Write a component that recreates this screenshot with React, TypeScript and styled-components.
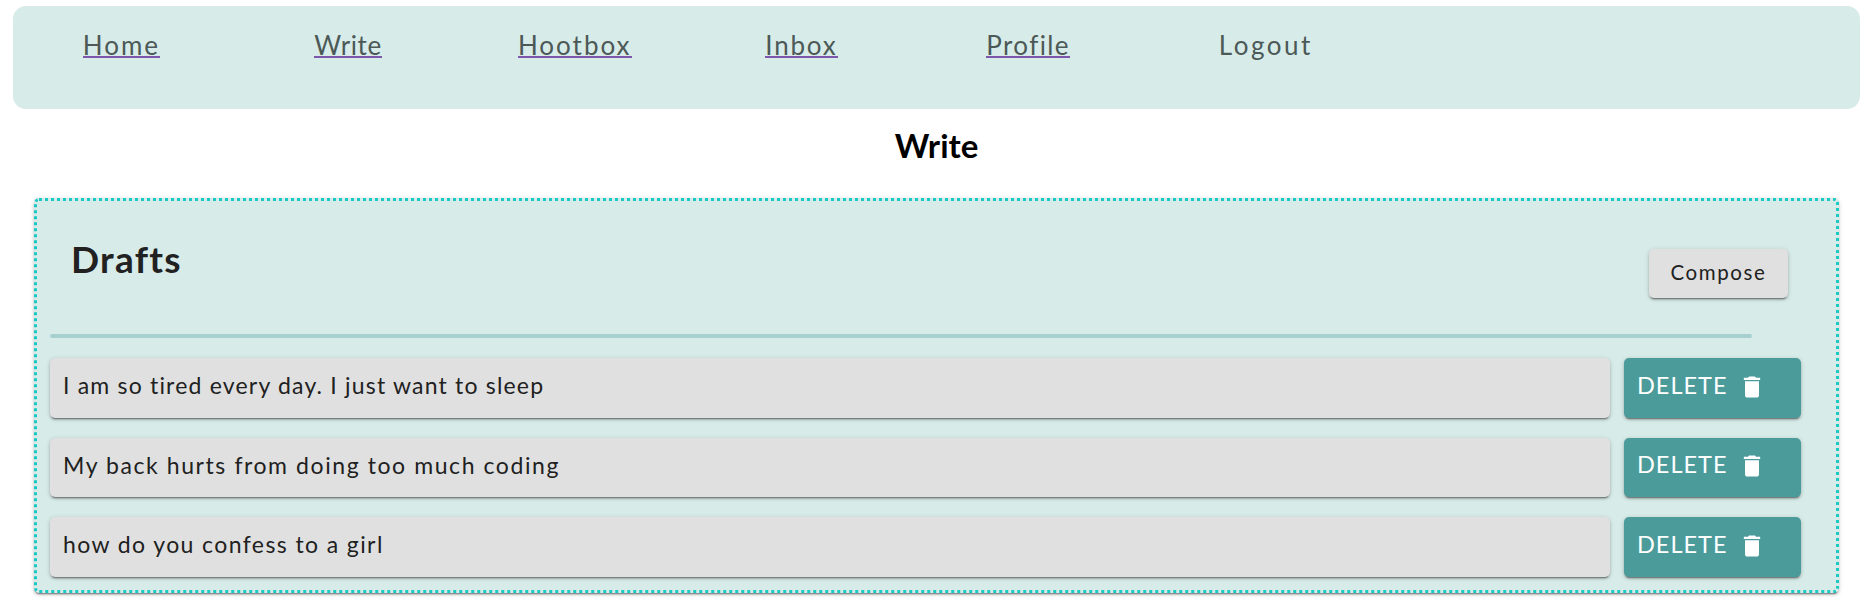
import React from "react";
import styled, { createGlobalStyle } from "styled-components";
import { MdDelete } from "react-icons/md";

const GlobalStyle = createGlobalStyle`
  * { box-sizing: border-box; }
  body {
    margin: 0;
    background: #fff;
    color: #212121;
    font-family: Lato, "Open Sans", sans-serif;
    font-weight: 400;
  }
`;

const elevation = `
  box-shadow: 0 3px 1px -2px rgba(0, 0, 0, 0.3), 0 2px 2px 0 rgba(0, 0, 0, 0.18),
    0 1px 5px 0 rgba(0, 0, 0, 0.16);
`;

const Page = styled.div`
  height: 612px;
  padding: 6px 13px 0;
  overflow: hidden;
`;

const NavBar = styled.nav`
  display: grid;
  grid-template-columns: repeat(6, 226.7px);
  height: 103px;
  padding: 15px 0 0;
  border-radius: 13px;
  background: #d7ebe9;
`;

const NavItem = styled.div<{ $shift?: number }>`
  margin-left: ${(p) => p.$shift ?? -10}px;
  text-align: center;
  font-size: 26px;
  line-height: 49px;
`;

const NavLink = styled.a<{ $track: number; $underline?: boolean }>`
  border-bottom: ${(p) => (p.$underline ? "2px solid #7e57ad" : "none")};
  display: inline-block;
  height: 37px;
  color: #4c5957;
  letter-spacing: ${(p) => p.$track}px;
  white-space: nowrap;
`;

const Title = styled.h1`
  height: 89px;
  margin: 0;
  padding-top: 16px;
  text-align: center;
  color: #000;
  font-size: 33px;
  font-weight: 700;
  line-height: 40px;
`;

const Panel = styled.section`
  height: 395px;
  margin: 0 21px;
  padding: 0 13px;
  border: 3px dotted #1bc9c4;
  border-radius: 5px;
  background: #d7ebe9;
  ${elevation}
`;

const PanelHead = styled.header`
  display: flex;
  justify-content: space-between;
  height: 133px;
  padding: 0 35px 0 21px;
`;

const PanelTitle = styled.h2`
  margin: 35px 0 0;
  font-size: 37px;
  font-weight: 700;
  line-height: 46px;
  letter-spacing: 1.3px;
`;

const ComposeButton = styled.button`
  width: 139px;
  height: 49px;
  margin-top: 48px;
  padding: 0 0 3px;
  border: 0;
  border-radius: 5px;
  background: #e0e0e0;
  color: #212121;
  font: 400 20.5px Lato, sans-serif;
  letter-spacing: 1.6px;
  ${elevation}
`;

const Divider = styled.hr`
  width: 1702px;
  height: 4px;
  margin: 0 0 20px;
  border: 0;
  border-radius: 2px;
  background: #a6d1cf;
`;

const DraftList = styled.div`
  display: grid;
  gap: 20px;
`;

const DraftRow = styled.div`
  display: grid;
  grid-template-columns: 1560px 177px;
  gap: 14px;
  height: 59.5px;
`;

const DraftCard = styled.div<{ $track: number }>`
  padding-left: 13px;
  border-radius: 5px;
  background: #e0e0e0;
  font-size: 23px;
  line-height: 55px;
  letter-spacing: ${(p) => p.$track}px;
  white-space: nowrap;
  ${elevation}
`;

const DeleteButton = styled.button`
  display: flex;
  align-items: center;
  gap: 10px;
  padding: 0 0 2px 13px;
  border: 0;
  border-radius: 5px;
  background: #4b9b9a;
  color: #fff;
  font: 400 23.5px Lato, sans-serif;
  letter-spacing: 1px;
  ${elevation}
`;

const DeleteLabel = styled.span`
  padding-bottom: 4px;
`;

const links = [
  { label: "Home", track: 2 },
  { label: "Write", track: 0.6 },
  { label: "Hootbox", track: 2 },
  { label: "Inbox", track: 1.8 },
  { label: "Profile", track: 1.4 },
];

const drafts = [
  { text: "I am so tired every day. I just want to sleep", track: 1.19 },
  { text: "My back hurts from doing too much coding", track: 1.58 },
  { text: "how do you confess to a girl", track: 1.4 },
];

export default function App() {
  return (
    <>
      <GlobalStyle />
      <Page>
        <NavBar>
          {links.map((l) => (
            <NavItem key={l.label}>
              <NavLink $track={l.track} $underline>
                {l.label}
              </NavLink>
            </NavItem>
          ))}
          <NavItem $shift={12}>
            <NavLink $track={2.5}>Logout</NavLink>
          </NavItem>
        </NavBar>
        <Title>Write</Title>
        <Panel>
          <PanelHead>
            <PanelTitle>Drafts</PanelTitle>
            <ComposeButton>Compose</ComposeButton>
          </PanelHead>
          <Divider />
          <DraftList>
            {drafts.map((d) => (
              <DraftRow key={d.text}>
                <DraftCard $track={d.track}>{d.text}</DraftCard>
                <DeleteButton>
                  <DeleteLabel>DELETE</DeleteLabel>
                  <MdDelete size={28} />
                </DeleteButton>
              </DraftRow>
            ))}
          </DraftList>
        </Panel>
      </Page>
    </>
  );
}
